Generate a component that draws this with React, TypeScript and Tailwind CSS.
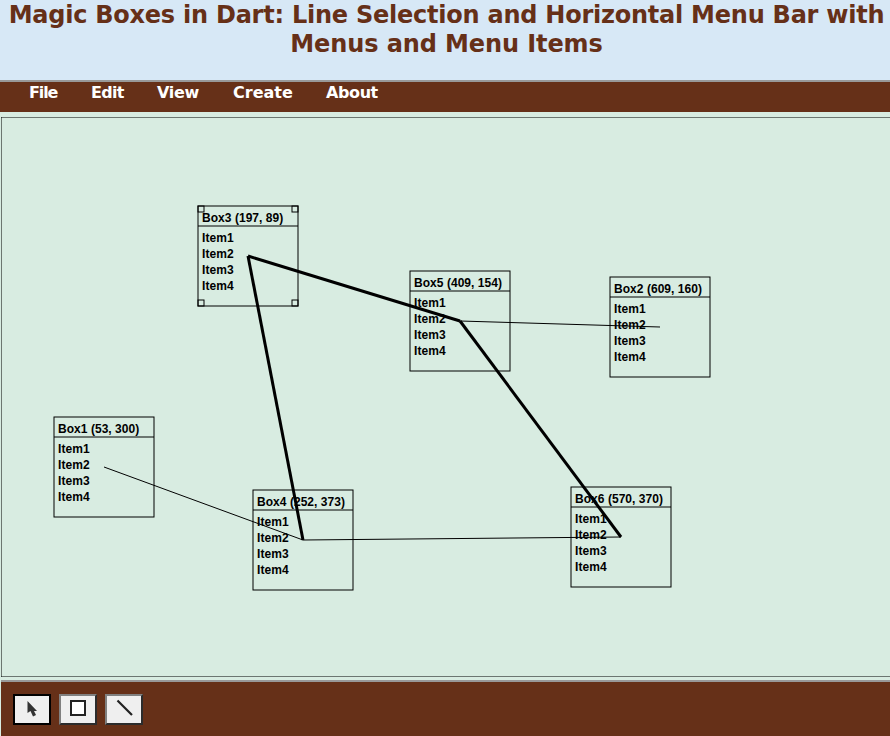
import type { ReactNode } from 'react';

type Box = { name: string; x: number; y: number; selected?: boolean };

const SIZE = 100;
const HANDLE = 6;

const boxes: Box[] = [
  { name: 'Box1', x: 53, y: 300 },
  { name: 'Box2', x: 609, y: 160 },
  { name: 'Box3', x: 197, y: 89, selected: true },
  { name: 'Box4', x: 252, y: 373 },
  { name: 'Box5', x: 409, y: 154 },
  { name: 'Box6', x: 570, y: 370 },
];

const lines = [
  { from: 0, to: 3, width: 1 },
  { from: 3, to: 5, width: 1 },
  { from: 4, to: 1, width: 1 },
  { from: 2, to: 4, width: 3 },
  { from: 2, to: 3, width: 3 },
  { from: 4, to: 5, width: 3 },
];

const items = ['Item1', 'Item2', 'Item3', 'Item4'];

const menus = [
  { label: 'File', place: 'w-[62px] tracking-[-1.1px]' },
  { label: 'Edit', place: 'w-[66px] tracking-[-0.7px]' },
  { label: 'View', place: 'w-[76px] tracking-[-0.3px]' },
  { label: 'Create', place: 'w-[93px]' },
  { label: 'About', place: 'w-[80px] tracking-[-0.4px]' },
];

function BoxShape({ box }: { box: Box }) {
  const far = SIZE - HANDLE;
  return (
    <g transform={`translate(${box.x} ${box.y})`}>
      <g fill="none" stroke="black">
        <rect width={SIZE} height={SIZE} />
        <path d={`M0 20H${SIZE}`} />
        {box.selected &&
          [[0, 0], [far, 0], [0, far], [far, far]].map(([x, y]) => (
            <rect key={`${x}-${y}`} x={x} y={y} width={HANDLE} height={HANDLE} />
          ))}
      </g>
      <text x="4" y="16" className="tracking-[0.04px]">{`${box.name} (${box.x}, ${box.y})`}</text>
      {items.map((item, i) => (
        <text key={item} x="4" y={36 + i * 16} className="tracking-[0.08px]">{item}</text>
      ))}
    </g>
  );
}

function Board() {
  return (
    <svg width="900" height="560" className="ml-px block shrink-0 font-['Liberation_Sans',Arial,sans-serif] text-[12px] font-bold">
      <rect width="900" height="560" fill="none" stroke="black" />
      {boxes.map((box) => <BoxShape key={box.name} box={box} />)}
      {lines.map(({ from, to, width }) => (
        <line
          key={`${from}-${to}`}
          x1={boxes[from].x + 50}
          y1={boxes[from].y + 50}
          x2={boxes[to].x + 50}
          y2={boxes[to].y + 50}
          stroke="black"
          strokeWidth={width}
        />
      ))}
    </svg>
  );
}

function Tool({ active, label, children }: { active?: boolean; label: string; children: ReactNode }) {
  const border = active
    ? 'border-black'
    : 'border-t-[#808080] border-l-[#808080] border-r-[#2c2c2c] border-b-[#2c2c2c]';
  return (
    <button aria-label={label} className={`h-[31px] w-[38px] border-2 bg-[#efefef] ${border}`}>
      <svg width="34" height="27" className="block">{children}</svg>
    </button>
  );
}

export default function App() {
  return (
    <div className="flex h-[736px] w-[890px] flex-col overflow-hidden bg-[#d8ece1]">
      <header className="h-[80px] bg-[#d7e8f6] pt-px pl-[3px] text-center font-['DejaVu_Sans',Verdana,sans-serif] text-[24px] leading-[29px] font-bold whitespace-nowrap text-[#663018]">
        <h1>
          <span className="block tracking-[-0.24px]">Magic Boxes in Dart: Line Selection and Horizontal Menu Bar with</span>
          <span className="block tracking-[-0.1px]">Menus and Menu Items</span>
        </h1>
      </header>
      <nav className="mb-[5px] flex h-[32px] border-t-2 border-[#999999] bg-[#663018] pt-px pl-[29px] font-['DejaVu_Sans',Verdana,sans-serif] text-[16px] leading-[20px] font-bold text-white">
        {menus.map(({ label, place }) => (
          <span key={label} className={place}>{label}</span>
        ))}
      </nav>
      <Board />
      <footer className="mt-[3px] ml-px flex h-[56px] shrink-0 gap-2 border-t-2 border-[#999999] bg-[#663018] pt-3 pl-3">
        <Tool active label="Select">
          <path d="M12.500 5V17L15.500 15L18 20.500L21 19L19 15H22Z" fill="#333" />
        </Tool>
        <Tool label="Box">
          <rect x="10" y="5" width="14" height="14" fill="white" stroke="#222" strokeWidth="2" />
        </Tool>
        <Tool label="Line">
          <path d="M10.500 4.500L25 19" stroke="#222" strokeWidth="2.200" />
        </Tool>
      </footer>
    </div>
  );
}
